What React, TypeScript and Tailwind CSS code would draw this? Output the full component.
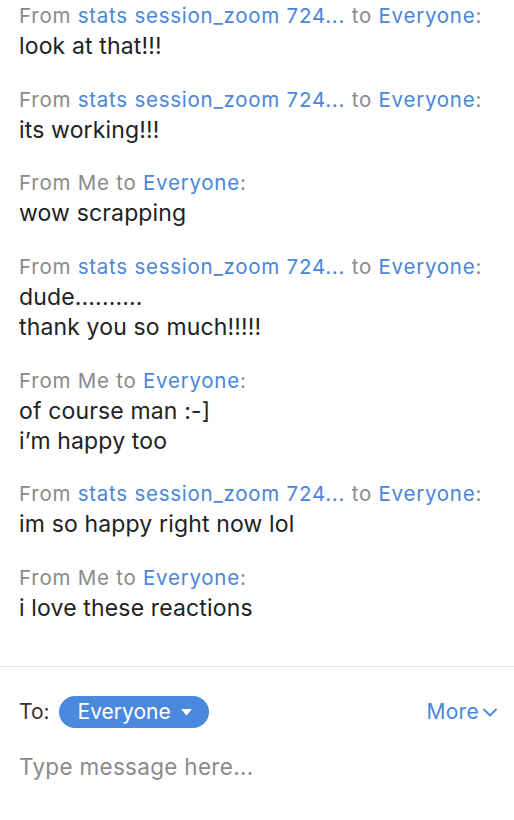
type Msg = { from: string; me: boolean; lines: string[] };

const messages: Msg[] = [
  { from: "stats session_zoom 724...", me: false, lines: ["look at that!!!"] },
  { from: "stats session_zoom 724...", me: false, lines: ["its working!!!"] },
  { from: "Me", me: true, lines: ["wow scrapping"] },
  { from: "stats session_zoom 724...", me: false, lines: ["dude..........", "thank you so much!!!!!"] },
  { from: "Me", me: true, lines: ["of course man :-]", "i\u2019m happy too"] },
  { from: "stats session_zoom 724...", me: false, lines: ["im so happy right now lol"] },
  { from: "Me", me: true, lines: ["i love these reactions"] },
];

export default function App() {
  return (
    <div
      className="flex h-[820px] w-[514px] flex-col bg-white"
      style={{ fontFamily: 'Inter, "Liberation Sans", Arial, sans-serif' }}
    >
      {/* Messages */}
      <div className="flex h-[666px] flex-col gap-[23.7px] px-[19px] pt-px">
        {messages.map((m, i) => (
          <div key={i}>
            <p className="text-[20.5px] leading-[30px] tracking-[0.75px] text-[#8a8a8a]">
              From{" "}
              {m.me ? (
                <span>Me</span>
              ) : (
                <span className="text-[#4a86d9]">{m.from}</span>
              )}{" "}
              to <span className="text-[#4a86d9]">Everyone</span>:
            </p>
            {m.lines.map((l, j) => (
              <p key={j} className="text-[23px] leading-[30px] tracking-[0.15px] text-[#222]">
                {l}
              </p>
            ))}
          </div>
        ))}
      </div>

      {/* Composer */}
      <div className="flex-1 border-t border-[#e4e4e4] pl-[19px] pr-[17px]">
        <div className="mt-[29px] flex items-center justify-between">
          <div className="flex items-center gap-[9px]">
            <span className="text-[21px] text-[#333]">To:</span>
            <button className="flex h-[32px] items-center gap-[10px] rounded-full bg-[#4a89dc] pl-[19px] pr-[17px] text-[21px] text-white">
              Everyone
              <svg width="11" height="7" viewBox="0 0 11 7">
                <path d="M0 0h11L5.5 6.5z" fill="white" />
              </svg>
            </button>
          </div>
          <button className="flex items-center gap-[4px] text-[21px] tracking-[0.3px] text-[#4a86d9]">
            More
            <svg width="14" height="9" viewBox="0 0 14 9" fill="none">
              <path d="M1 1.5l6 6 6-6" stroke="#4a86d9" strokeWidth="1.8" strokeLinecap="round" strokeLinejoin="round" />
            </svg>
          </button>
        </div>
        <p className="mt-[22px] text-[22.5px] tracking-[0.3px] text-[#8a8a8a]">Type message here...</p>
      </div>
    </div>
  );
}
